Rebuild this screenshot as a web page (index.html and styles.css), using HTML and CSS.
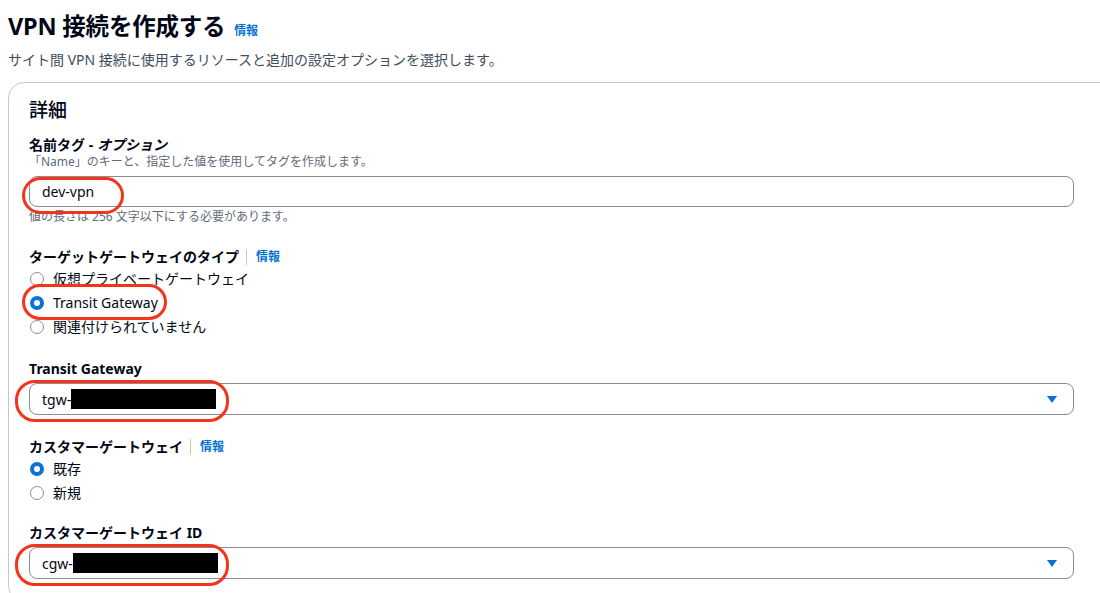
FILE: index.html
```html
<!DOCTYPE html>
<html lang="ja">

<head>
    <meta charset="UTF-8">
    <meta name="viewport" content="width=device-width, initial-scale=1.0">
    <title>VPN 接続を作成する</title>

    <link rel="stylesheet" href="styles.css">

</head>

<body>
    <div class="page">
        <div class="page-head">
            <h1>VPN 接続を作成する <a class="info" href="#">情報</a></h1>
            <p class="lead">サイト間 VPN 接続に使用するリソースと追加の設定オプションを選択します。</p>
        </div>

        <div class="panel">
            <h2>詳細</h2>

            <div class="field">
                <div class="label">名前タグ - <i>オプション</i></div>
                <div class="desc">「Name」のキーと、指定した値を使用してタグを作成します。</div>
                <div class="control">
                    <div class="input">dev-vpn</div>
                    <span class="mark mark-name"></span>
                </div>
                <div class="hint">値の長さは 256 文字以下にする必要があります。</div>
            </div>

            <div class="field field-radio">
                <div class="label">ターゲットゲートウェイのタイプ <span class="sep"></span><a class="info" href="#">情報</a></div>
                <div class="radio"><span class="dot"></span>仮想プライベートゲートウェイ</div>
                <div class="radio checked control"><span class="dot"></span>Transit Gateway<span class="mark mark-radio"></span></div>
                <div class="radio"><span class="dot"></span>関連付けられていません</div>
            </div>

            <div class="field field-select">
                <div class="label">Transit Gateway</div>
                <div class="control">
                    <div class="input select">tgw-<span class="redact"></span><span class="caret"></span></div>
                    <span class="mark mark-select"></span>
                </div>
            </div>

            <div class="field field-radio">
                <div class="label">カスタマーゲートウェイ <span class="sep"></span><a class="info" href="#">情報</a></div>
                <div class="radio checked"><span class="dot"></span>既存</div>
                <div class="radio"><span class="dot"></span>新規</div>
            </div>

            <div class="field field-select last">
                <div class="label">カスタマーゲートウェイ ID</div>
                <div class="control">
                    <div class="input select">cgw-<span class="redact"></span><span class="caret"></span></div>
                    <span class="mark mark-select"></span>
                </div>
            </div>
        </div>
    </div>
</body>

</html>
```

FILE: styles.css
```css
* {
    margin: 0;
    padding: 0;
    box-sizing: border-box;
}

body {
    background: #ffffff;
    color: #000716;
    font-family: "Noto Sans", "Noto Sans CJK JP", sans-serif;
    overflow: hidden;
}

.page {
    padding: 11px 0 0 8px;
}

h1 {
    font-size: 23.5px;
    line-height: 30px;
    font-weight: 700;
    letter-spacing: -0.2px;
}

.info {
    color: #0972d3;
    font-size: 12px;
    font-weight: 700;
    text-decoration: none;
    margin-left: 3px;
}

.lead {
    margin-top: 4px;
    font-size: 14px;
    line-height: 20px;
    color: #414d5c;
}

.panel {
    margin-top: 12px;
    width: calc(100% + 40px);
    min-height: 520px;
    border: 1px solid #c6c6cd;
    border-radius: 16px;
    background: #fff;
    padding: 13px 20px 0 20px;
}

h2 {
    font-size: 19px;
    line-height: 28px;
    font-weight: 500;
}

.field {
    margin-top: 11px;
}

.label {
    font-size: 14px;
    line-height: 20px;
    font-weight: 700;
    display: flex;
    align-items: center;
}

.label i {
    font-style: italic;
    margin-left: 4px;
}

.sep {
    display: inline-block;
    width: 1px;
    height: 16px;
    background: #c6c6cd;
    margin: 0 5px 0 7px;
}

.label .info {
    margin-left: 4px;
}

.desc,
.hint {
    font-size: 12px;
    line-height: 16px;
    color: #5f6b7a;
}

.desc {
    margin-top: -1px;
}

.control {
    position: relative;
}

.input {
    margin-top: 6px;
    width: 1045px;
    height: 31px;
    border: 1px solid #8c8c94;
    border-radius: 8px;
    padding: 0 12px;
    font-size: 14px;
    display: flex;
    align-items: center;
}

.hint {
    margin-top: 2px;
}

.field-radio {
    margin-top: 22px;
}

.radio {
    display: flex;
    align-items: center;
    font-size: 14px;
    line-height: 24px;
    height: 24px;
}

.dot {
    width: 14px;
    height: 14px;
    border: 1.5px solid #8c8c94;
    border-radius: 50%;
    margin: 0 9px 0 1px;
    background: #fff;
}

.radio.checked .dot {
    border: 4px solid #0972d3;
}

.field-select {
    margin-top: 20px;
}

.field-select .input {
    margin-top: 4px;
    height: 32px;
}

.field-select.last {
    margin-top: 18px;
}

.redact {
    display: inline-block;
    width: 145px;
    height: 20px;
    background: #000;
}

.caret {
    margin-left: auto;
    margin-right: 4px;
    width: 0;
    height: 0;
    border-left: 5px solid transparent;
    border-right: 5px solid transparent;
    border-top: 7px solid #0972d3;
}

/* 赤い注釈の枠 */
.mark {
    position: absolute;
    border: 3px solid #f5331a;
    border-radius: 20px;
    pointer-events: none;
}

.mark-name {
    left: -7px;
    top: 1px;
    width: 102px;
    height: 37px;
}

.mark-radio {
    left: -7px;
    top: -7px;
    width: 145px;
    height: 36px;
}

.mark-select {
    left: -14px;
    top: -3px;
    width: 214px;
    height: 42px;
}
```
